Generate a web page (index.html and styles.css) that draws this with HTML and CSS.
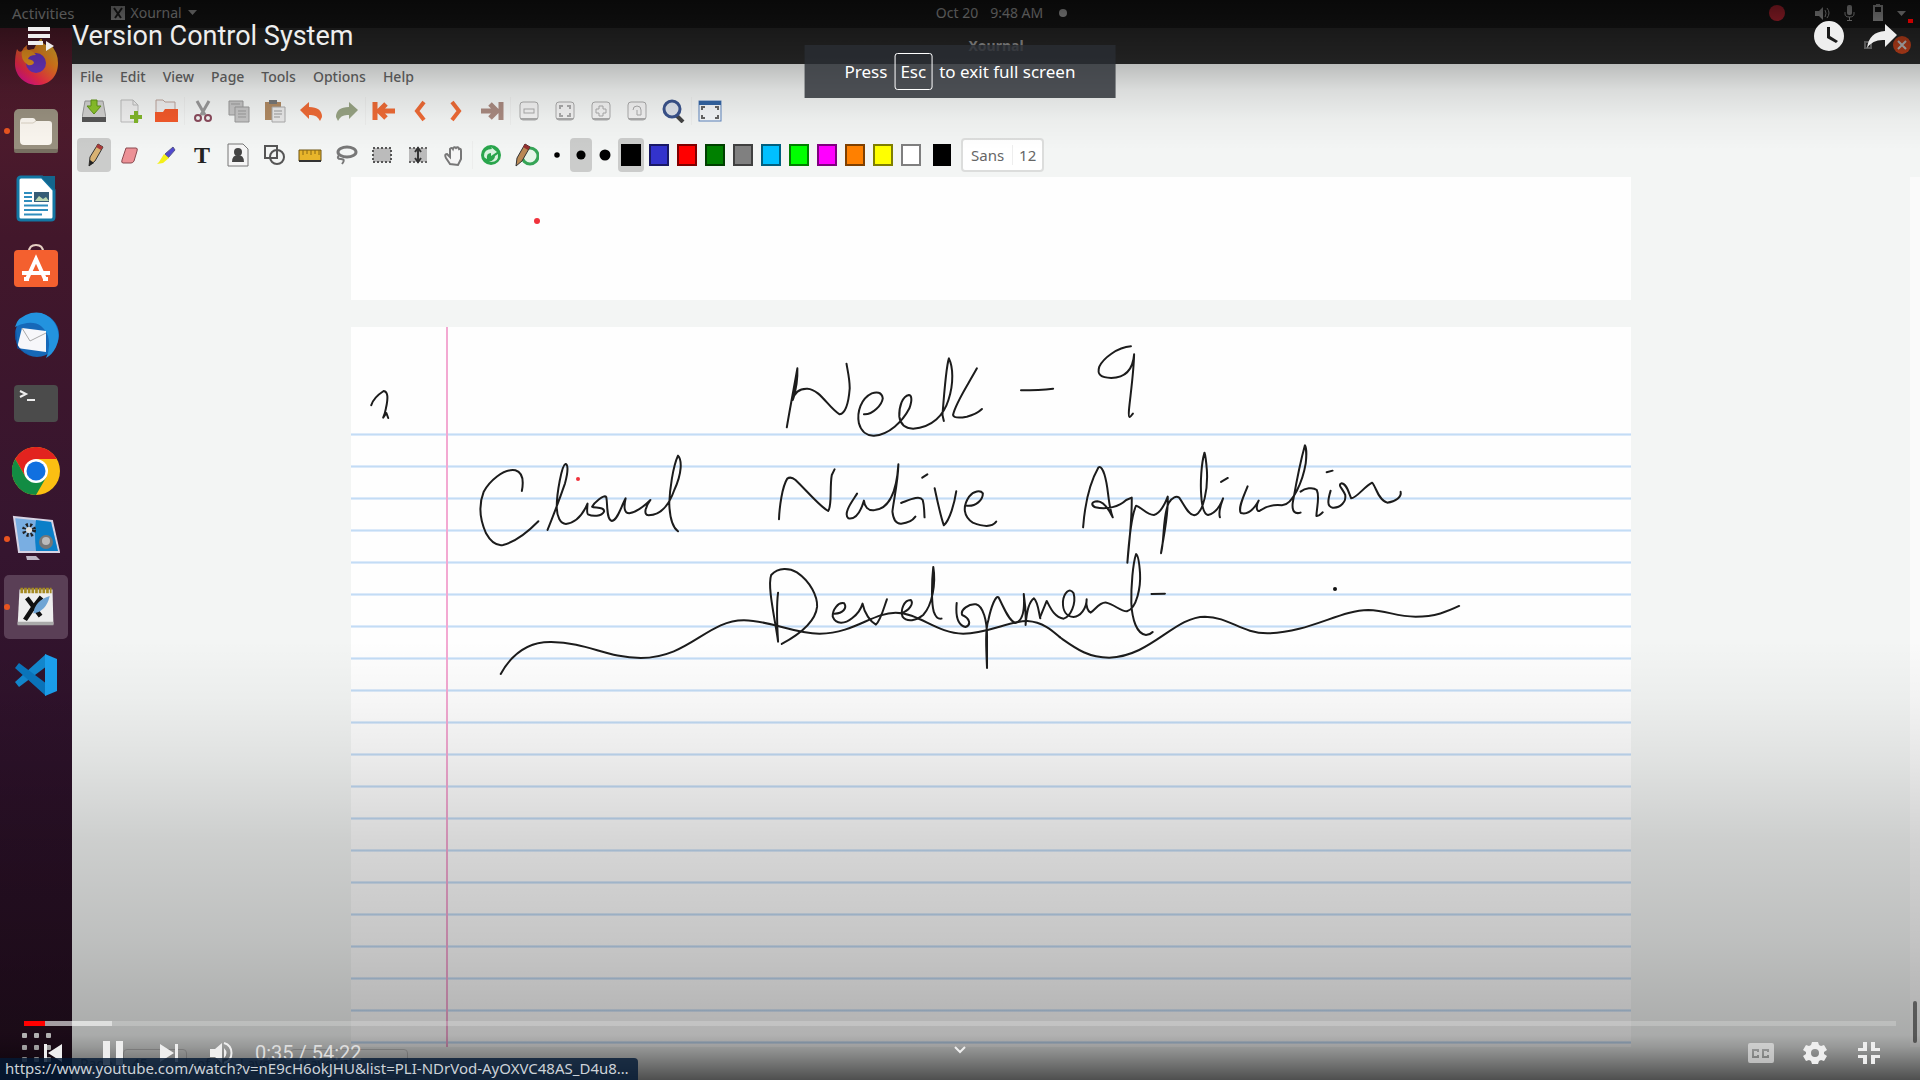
FILE: index.html
```
<!DOCTYPE html>
<html lang="en">
<head>
<meta charset="utf-8">
<meta name="viewport" content="width=device-width, initial-scale=1">
<title>Version Control System</title>
<link rel="stylesheet" href="styles.css">
</head>
<body>
<main class="player">

  <section class="desktop" aria-label="Video frame">
    <header class="topbar">
      <div class="topbar-left">
        <span>Activities</span>
        <span class="app-menu">
          <svg width="14" height="14" viewBox="0 0 14 14"><rect width="14" height="14" fill="#aaa"/><path d="M3 2l7 10M11 2L4 12" stroke="#222" stroke-width="2"/></svg>
          Xournal
          <svg width="9" height="6" viewBox="0 0 9 6"><path d="M0 0h9L4.500 5z" fill="currentColor"/></svg>
        </span>
      </div>
      <div class="clock"><span>Oct 20</span><span>9:48 AM</span><i class="notice"></i></div>
      <div class="tray">
        <svg width="140" height="20" viewBox="0 0 140 20" fill="currentColor">
          <circle cx="9" cy="10" r="8" fill="#d62a3a"/>
          <path d="M47 8h4l4-4v13l-4-4h-4z"/><path d="M57 7q2 3 0 7M59 5q4 5 0 10" stroke="currentColor" fill="none"/>
          <rect x="79" y="2" width="5" height="10" rx="2"/><path d="M77 9v2q0 3 4.500 3t4.500-3V9M81.500 14v3M79 17.500h5" stroke="currentColor" fill="none"/>
          <path d="M106 3h8v14h-8zM108 2h4" stroke="currentColor" stroke-width="2" fill="none"/><rect x="107" y="9" width="6" height="7"/>
          <path d="M129 8h9l-4.500 5z"/>
        </svg>
      </div>
    </header>

    <div class="workspace">
      <nav class="dock" aria-label="Dock">
        <button class="dock-item" aria-label="Firefox"><svg viewBox="0 0 48 48"><defs><linearGradient id="ff" x1="1" y1="0" x2=".3" y2="1"><stop offset="0" stop-color="#ffe03a"/><stop offset=".45" stop-color="#ff8a1f"/><stop offset=".8" stop-color="#ff2f4d"/><stop offset="1" stop-color="#e0138c"/></linearGradient></defs><path d="M5 10q2 4 5 2 2-4 5-6-1 5 2 5 3-1 5-1 4-9 8-11-1 5 4 7l2 2q2-2 2-3 8 8 8 19c0 14-9 22-21 22S3 37 3 25q0-9 2-15z" fill="url(#ff)"/><circle cx="24" cy="24" r="10" fill="#7139cf"/><path d="M10 12q8-4 14 4-7 0-8 4 6 1 6 4-2 3-6 2-8-5-6-14z" fill="#ffa022"/></svg></button>
        <button class="dock-item running" aria-label="Files"><svg viewBox="0 0 48 48"><rect x="2" y="2" width="44" height="44" rx="5" fill="#98907f"/><rect x="2" y="42" width="44" height="4" rx="2" fill="#776f61"/><path d="M8 15q0-4 3-4h10q2 0 3 3h13q3 0 3 3v17q0 4-4 4H12q-4 0-4-4z" fill="#faf6ef"/><path d="M9 16h12l3-2" stroke="#d8d0c2" fill="none"/></svg></button>
        <button class="dock-item" aria-label="LibreOffice Writer"><svg viewBox="0 0 48 48"><path d="M9 2h21l12 13v27q0 3-3 3H9q-3 0-3-3V5q0-3 3-3z" fill="#fff" stroke="#1377a4" stroke-width="3"/><path d="M28 1h15v15z" fill="#13658d"/><path d="M12 18h8M12 22h8M12 26h8M12 30.500h24M12 35h24M12 39.500h18" stroke="#2f8dbd" stroke-width="2"/><rect x="22" y="17" width="15" height="10" fill="#365d77"/><path d="M23 26l4-5 4 3 3-2 3 4z" fill="#b9d6b0"/></svg></button>
        <button class="dock-item" aria-label="Ubuntu Software"><svg viewBox="0 0 48 48"><path d="M17 9q0-7 7-7t7 7" fill="none" stroke="#e5cfc2" stroke-width="2"/><rect x="2" y="7" width="44" height="37" rx="4" fill="#f4602f"/><path d="M15 36l9-20 9 20M10 30h28M12 36h5M31 36h5" stroke="#fff" stroke-width="4" fill="none"/></svg></button>
        <button class="dock-item" aria-label="Thunderbird"><svg viewBox="0 0 48 48"><circle cx="25" cy="24" r="22" fill="#1668b8"/><path d="M3 16Q5 6 19 2q14-3 23 9 8 12 2 25-4 8-10 11 5-10 2-22-6-15-21-13-7 1-12 4z" fill="#2393df"/><path d="M10 17l24 3 0 21-29-4z" fill="#f7f7fa"/><path d="M10 17l8 13 16-8" fill="none" stroke="#aaa"/><path d="M4 18Q0 37 19 45L5 37z" fill="#0c448e"/></svg></button>
        <button class="dock-item" aria-label="Terminal"><svg viewBox="0 0 48 48"><rect x="2" y="6" width="44" height="37" rx="4" fill="#4b4b4b"/><path d="M8 12l6 3-6 3M15 21h8" fill="none" stroke="#eee" stroke-width="2"/></svg></button>
        <button class="dock-item" aria-label="Google Chrome"><svg viewBox="0 0 48 48"><circle cx="24" cy="24" r="24" fill="#fbbf12"/><path d="M3.200 12A24 24 0 0 1 44.800 12H24L13.600 30z" fill="#e2231f"/><path d="M3.200 12A24 24 0 0 0 24 48L34.400 30 24 24 13.600 30z" fill="#128c43"/><circle cx="24" cy="24" r="12" fill="#fff"/><circle cx="24" cy="24" r="9.500" fill="#1070e0"/></svg></button>
        <button class="dock-item running" aria-label="Kazam"><svg viewBox="0 0 48 48"><path d="M2 2l38 4 7 31H7z" fill="#79aee2" stroke="#d7d3e4" stroke-width="2"/><path d="M24 5l15 2 7 29-22 0q-2-18 0-31z" fill="#0b7fc8"/><circle cx="17" cy="15" r="5" fill="none" stroke="#222" stroke-width="4" stroke-dasharray="2 2"/><circle cx="17" cy="15" r="3" fill="#ddd"/><circle cx="34" cy="27" r="7" fill="#777"/><circle cx="34" cy="26" r="4" fill="#bbb"/><path d="M14 41h10l4 4H15z" fill="#bdb6c6"/></svg></button>
        <button class="dock-item running active" aria-label="Xournal"><svg viewBox="0 0 48 48"><path d="M6 5h36l1 38H4z" fill="#eee"/><path d="M4 40h39v4H4z" fill="#aaa"/><path d="M7 6h34" stroke="#a58a23" stroke-width="6" stroke-dasharray="3 1"/><path d="M14 14l15 20M30 13q-10 12-18 25" stroke="#111" stroke-width="5" fill="none"/><path d="M39 12q-16 5-18 19 14-2 18-19z" fill="#6ea4d4"/></svg></button>
        <button class="dock-item" aria-label="Visual Studio Code"><svg viewBox="0 0 48 48"><path d="M34 3L3 31l4 5 28-21z" fill="#1288cf"/><path d="M34 45L3 17l4-5 28 21z" fill="#0a76bd"/><path d="M33 3l12 5v32l-12 5z" fill="#1ba0ee"/></svg></button>
        <button class="dock-item dock-apps" aria-label="Show Applications"><svg viewBox="0 0 48 48" fill="#fff"><rect x="10" y="10" width="5" height="5" rx="1"/><rect x="22" y="10" width="5" height="5" rx="1"/><rect x="34" y="10" width="5" height="5" rx="1"/><rect x="10" y="22" width="5" height="5" rx="1"/><rect x="22" y="22" width="5" height="5" rx="1"/><rect x="34" y="22" width="5" height="5" rx="1"/><rect x="10" y="34" width="5" height="5" rx="1"/><rect x="22" y="34" width="5" height="5" rx="1"/><rect x="34" y="34" width="5" height="5" rx="1"/></svg></button>
      </nav>

      <div class="window">
        <div class="titlebar">
          <strong>Xournal</strong>
          <div class="window-buttons">
            <svg width="50" height="20" viewBox="0 0 50 20"><rect x="3" y="7" width="6" height="6" fill="none" stroke="#888" stroke-width="2"/><circle cx="40" cy="10" r="9" fill="#d8491f"/><path d="M36 6l8 8M44 6l-8 8" stroke="#ddd" stroke-width="2"/></svg>
          </div>
        </div>

        <nav class="menubar" aria-label="Menu">
          <button>File</button><button>Edit</button><button>View</button><button>Page</button><button>Tools</button><button>Options</button><button>Help</button>
        </nav>

        <div class="toolbar">
          <button class="tool" aria-label="Save"><svg viewBox="0 0 24 24"><path d="M3 2h18l3 17H0z" fill="#d0d0ce" stroke="#999"/><path d="M0 18h24v5H0z" fill="#555"/><path d="M9 1h6v6h4l-7 8-7-8h4z" fill="#8bc42b" stroke="#5f9316"/></svg></button>
          <button class="tool" aria-label="New"><svg viewBox="0 0 24 24"><path d="M3 1h12l5 5v17H3z" fill="#eee" stroke="#bbb"/><path d="M15 1v5h5" fill="none" stroke="#bbb"/><path d="M16 12h4v4h4v4h-4v4h-4v-4h-4v-4h4z" fill="#80b52a"/></svg></button>
          <button class="tool" aria-label="Open"><svg viewBox="0 0 24 24"><path d="M2 20V1h7l2 2h10v10" fill="#eee" stroke="#bba29a"/><path d="M1 23V13h8l2-3h13v13z" fill="#f2592a"/></svg></button>
          <i class="sep"></i>
          <button class="tool" aria-label="Cut"><svg viewBox="0 0 24 24" fill="none"><path d="M6 2l8 14M18 2l-8 14" stroke="#999" stroke-width="3"/><circle cx="7" cy="19" r="3" stroke="#8a4a5c" stroke-width="2"/><circle cx="17" cy="19" r="3" stroke="#8a4a5c" stroke-width="2"/></svg></button>
          <button class="tool" aria-label="Copy"><svg viewBox="0 0 24 24" fill="#c4c4c4" stroke="#999"><path d="M2 2h14v14H2z"/><path d="M8 8h14v15H8z"/><path d="M4 5h9M11 12h8M11 15h8M11 18h8"/></svg></button>
          <button class="tool" aria-label="Paste"><svg viewBox="0 0 24 24"><path d="M2 3h16v18H2z" fill="#b08a63"/><path d="M6 1h8v4H6z" fill="#777"/><path d="M9 8h13v15H9z" fill="#e8e8e8" stroke="#aaa"/><path d="M11 12h8M11 15h8M11 18h6" stroke="#999"/></svg></button>
          <button class="tool" aria-label="Undo"><svg viewBox="0 0 24 24"><path d="M1 11l9-8v5q13 0 13 10l-2 4q-3-7-11-6v4z" fill="#ee6a35"/></svg></button>
          <button class="tool" aria-label="Redo"><svg viewBox="0 0 24 24"><path d="M23 11l-9-8v5Q1 8 1 18l2 4q3-7 11-6v4z" fill="#97a383"/></svg></button>
          <i class="sep"></i>
          <button class="tool" aria-label="First page"><svg viewBox="0 0 24 24" fill="none" stroke="#ee6a35" stroke-width="4"><path d="M3 3v18M7 12h16M14 5l-7 7 7 7" stroke-width="5"/></svg></button>
          <button class="tool" aria-label="Previous page"><svg viewBox="0 0 24 24" fill="none" stroke="#ee6a35" stroke-width="4"><path d="M16 3L9 12l7 9"/></svg></button>
          <button class="tool" aria-label="Next page"><svg viewBox="0 0 24 24" fill="none" stroke="#ee6a35" stroke-width="4"><path d="M8 3l7 9-7 9"/></svg></button>
          <button class="tool" aria-label="Last page"><svg viewBox="0 0 24 24" fill="none" stroke="#a98a80" stroke-width="5"><path d="M21 3v18M17 12H1M10 5l7 7-7 7"/></svg></button>
          <i class="sep"></i>
          <button class="tool" aria-label="Zoom out"><svg viewBox="0 0 24 24" fill="#f2f2f2" stroke="#aaa"><rect x="3" y="3" width="18" height="18" rx="3"/><path d="M4 20h16" stroke-width="2"/><rect x="7" y="10" width="10" height="4"/></svg></button>
          <button class="tool" aria-label="Page width"><svg viewBox="0 0 24 24" fill="#f2f2f2" stroke="#aaa"><rect x="3" y="3" width="18" height="18" rx="3"/><path d="M4 20h16" stroke-width="2"/><path d="M7 10V7h3M14 7h3v3M17 14v3h-3M10 17H7v-3" stroke-width="2"/></svg></button>
          <button class="tool" aria-label="Zoom in"><svg viewBox="0 0 24 24" fill="#f2f2f2" stroke="#aaa"><rect x="3" y="3" width="18" height="18" rx="3"/><path d="M4 20h16" stroke-width="2"/><path d="M10 7h4v3h3v4h-3v3h-4v-3H7v-4h3z"/></svg></button>
          <button class="tool" aria-label="Normal size"><svg viewBox="0 0 24 24" fill="#f2f2f2" stroke="#aaa"><rect x="3" y="3" width="18" height="18" rx="3"/><path d="M4 20h16" stroke-width="2"/><path d="M8 11q0-4 4-4t4 4v5h-4v-5"/></svg></button>
          <button class="tool" aria-label="Find zoom"><svg viewBox="0 0 24 24"><path d="M15 16l7 7" stroke="#444" stroke-width="4"/><circle cx="11" cy="10" r="8" fill="#dde2ea" stroke="#3a538c" stroke-width="3"/></svg></button>
          <i class="sep"></i>
          <button class="tool" aria-label="Full screen"><svg viewBox="0 0 24 24"><rect x="1" y="2" width="22" height="20" fill="#f4f6f9" stroke="#5f86bd"/><path d="M1 2h22v4H1z" fill="#3465a4"/><path d="M4 11V8h3M17 8h3v3M20 16v3h-3M7 19H4v-3" stroke="#666" stroke-width="2" fill="none"/></svg></button>
        </div>

        <div class="toolbar">
          <button class="tool selected" aria-label="Pen"><svg viewBox="0 0 24 24"><path d="M7 23l1-9 8-13 5 3-8 14z" fill="#d8b273" stroke="#333"/><path d="M14 4l2-3 5 3-2 3z" fill="#a93a3a"/><path d="M7 23l1-6 4 3z" fill="#222"/></svg></button>
          <button class="tool" aria-label="Eraser"><svg viewBox="0 0 24 24"><path d="M8 5h10q2 0 1 3l-3 10q-1 2-3 2H5q-2 0-1-3z" fill="#ec9196" stroke="#8a4a50"/></svg></button>
          <button class="tool" aria-label="Highlighter"><svg viewBox="0 0 24 24"><path d="M11 11l8-7 2 3-7 8z" fill="#5049cf" stroke="#55558a"/><path d="M5 19l5-8 5 4-6 5-6 1z" fill="#f3ef19"/></svg></button>
          <button class="tool glyph" aria-label="Text">T</button>
          <button class="tool" aria-label="Image"><svg viewBox="0 0 24 24"><path d="M2 1h15l5 5v17H2z" fill="#f5f5f5" stroke="#777"/><circle cx="12" cy="9" r="4" fill="#444"/><path d="M6 19q0-7 6-7t6 7z" fill="#444"/></svg></button>
          <button class="tool" aria-label="Shapes"><svg viewBox="0 0 24 24" fill="none" stroke="#555" stroke-width="2"><path d="M3 3h12v12H3z"/><circle cx="15" cy="14" r="7"/></svg></button>
          <button class="tool" aria-label="Ruler"><svg viewBox="0 0 24 24"><path d="M1 7h22v11H1z" fill="#e8b52b" stroke="#6f5512"/><path d="M1 18h22" stroke="#333" stroke-width="2"/><path d="M5 7v5M9 7v4M13 7v5M17 7v4M21 7v5" stroke="#8a6916"/></svg></button>
          <button class="tool" aria-label="Lasso select"><svg viewBox="0 0 24 24" fill="none"><ellipse cx="13" cy="9" rx="9" ry="5" stroke="#777" stroke-width="3"/><path d="M5 12q-3 4 2 4t1 5" stroke="#777" stroke-width="2"/></svg></button>
          <button class="tool" aria-label="Select region"><svg viewBox="0 0 24 24"><rect x="3" y="5" width="18" height="14" fill="#bbb" stroke="#555" stroke-width="2" stroke-dasharray="2 2"/></svg></button>
          <button class="tool" aria-label="Vertical space"><svg viewBox="0 0 24 24"><rect x="3" y="5" width="18" height="14" fill="#bbb"/><path d="M3 5h18M3 19h18" stroke="#666" stroke-width="2" stroke-dasharray="2 2"/><path d="M12 5v14M9 9l3-4 3 4M9 15l3 4 3-4" stroke="#333" stroke-width="2" fill="none"/></svg></button>
          <button class="tool" aria-label="Hand"><svg viewBox="0 0 24 24"><path d="M8 21l-4-6q-2-4 1-4l3 3V6q2-2 3 0 1-3 3-1 2-2 3 1 2-1 2 2v8l-3 6z" fill="#f5f5f5" stroke="#777" stroke-width="2"/></svg></button>
          <i class="sep"></i>
          <button class="tool" aria-label="Default tool"><svg viewBox="0 0 24 24"><circle cx="12" cy="12" r="10" fill="#29a54c"/><path d="M5 13q0-7 8-7l-1-2 6 5-6 4v-3q-5 0-4 6-3-1-3-3z" fill="#d9f2df"/><path d="M19 11q1 9-9 8 6-2 6-6z" fill="#d9f2df"/></svg></button>
          <button class="tool" aria-label="Default pen"><svg viewBox="0 0 24 24"><circle cx="15" cy="13" r="8" fill="#e5f5e8" stroke="#35a456" stroke-width="3"/><path d="M1 23l1-8L10 1l5 3-8 14z" fill="#b98954" stroke="#333"/><path d="M8 4l2-3 5 3-2 3z" fill="#922f2f"/></svg></button>
          <button class="nib" aria-label="Fine"><svg viewBox="0 0 24 24"><circle cx="12" cy="12" r="3"/></svg></button>
          <button class="nib selected" aria-label="Medium"><svg viewBox="0 0 24 24"><circle cx="12" cy="12" r="5"/></svg></button>
          <button class="nib" aria-label="Thick"><svg viewBox="0 0 24 24"><circle cx="12" cy="12" r="6"/></svg></button>
          <div class="palette">
            <button class="swatch black selected" aria-label="Black"></button>
            <button class="swatch blue" aria-label="Blue"></button>
            <button class="swatch red" aria-label="Red"></button>
            <button class="swatch green" aria-label="Green"></button>
            <button class="swatch gray" aria-label="Gray"></button>
            <button class="swatch cyan" aria-label="Light blue"></button>
            <button class="swatch lime" aria-label="Light green"></button>
            <button class="swatch magenta" aria-label="Magenta"></button>
            <button class="swatch orange" aria-label="Orange"></button>
            <button class="swatch yellow" aria-label="Yellow"></button>
            <button class="swatch white" aria-label="White"></button>
          </div>
          <button class="current-color" aria-label="Current colour"></button>
          <button class="font-button"><span>Sans</span><span class="font-size">12</span></button>
        </div>

        <div class="content">
          <div class="canvas">
            <div class="sheet sheet-end">
              <svg class="ink" viewBox="0 0 1280 123"><circle cx="186" cy="44" r="3" fill="#f0323c"/></svg>
            </div>
            <div class="sheet sheet-ruled">
              <svg class="ink" viewBox="0 0 1280 720" role="img" aria-label="Week - 9 Cloud Native Application Development">
                <g class="stroke" transform="translate(-11 -7) scale(.4592 .3333)">
                  <path d="M68 256C72 235 85 222 95 213C105 215 105 235 100 265C98 280 95 290 94 293L101 279L105 294"/>
                  <path d="M973 322C978 280 985 230 996 145C997 180 992 215 986 240C990 215 1000 205 1018 206C1045 208 1065 265 1088 283C1102 280 1108 240 1110 205C1110 175 1105 150 1103 131"/>
                  <path d="M1141 283C1160 285 1180 255 1182 235C1180 215 1168 215 1158 220C1135 235 1125 275 1130 310C1135 335 1148 348 1163 347C1195 345 1225 305 1240 265C1248 235 1243 225 1239 225C1225 228 1217 260 1218 290C1220 310 1228 325 1248 326C1290 322 1315 285 1325 240C1337 190 1335 140 1326 115C1320 140 1315 230 1312 285L1315 303"/>
                  <path d="M1387 145C1365 200 1340 250 1335 285C1337 295 1350 294 1365 290C1380 285 1392 275 1398 267"/>
                  <path d="M1483 211C1510 211 1535 209 1553 206"/>
                  <path d="M396 513C400 485 398 458 382 451C355 445 325 485 313 515C300 560 305 600 318 640C330 670 342 678 355 675C385 665 410 635 432 604"/>
                  <path d="M452 630C465 585 480 530 490 490C498 450 496 432 491 432C483 435 472 520 472 560C472 590 480 612 492 612C515 608 530 580 539 551C538 575 537 580 540 583C550 590 570 590 575 575C577 560 553 565 549 560C553 550 575 520 580 532C583 555 580 600 592 603C605 600 612 560 622 535C618 560 618 580 630 580C650 575 665 555 676 540C665 560 660 585 672 586C700 585 718 550 728 510C745 460 745 420 736 407C725 440 718 510 717 550C718 590 722 620 736 634"/>
                  <path d="M956 598C957 560 963 500 974 476C980 470 985 472 992 480C1015 510 1045 560 1063 573C1072 560 1066 500 1071 465L1077 448"/>
                  <path d="M1126 521C1115 545 1095 580 1107 595C1125 600 1135 570 1141 542C1142 560 1150 572 1162 571C1195 568 1212 520 1216 433C1215 490 1205 545 1203 575C1205 600 1210 612 1222 611C1238 609 1248 600 1253 590"/>
                  <path d="M1222 549C1240 540 1262 525 1269 540C1273 560 1272 580 1273 592M1268 473L1279 463"/>
                  <path d="M1295 505C1302 550 1308 590 1315 616C1328 600 1338 550 1342 514"/>
                  <path d="M1365 557C1385 560 1400 540 1400 520C1395 510 1380 512 1370 530C1355 560 1358 590 1378 608C1400 620 1420 622 1429 605"/>
                  <path d="M954 818C950 860 952 920 954 965C948 900 930 800 939 765C955 740 980 745 995 757C1025 785 1040 830 1039 860C1036 900 1005 940 962 972"/>
                  <path d="M1077 881C1095 880 1105 865 1098 850C1085 845 1072 870 1073 890C1080 915 1100 912 1115 895C1130 880 1135 865 1138 851C1142 880 1155 905 1167 914C1178 900 1185 860 1191 838"/>
                  <path d="M1222 880C1240 872 1250 850 1243 840C1228 840 1220 870 1225 890C1235 908 1255 902 1270 885C1290 855 1298 790 1292 741C1288 790 1288 850 1293 875C1298 895 1303 898 1310 896"/>
                  <path d="M1343 849C1340 890 1345 915 1362 921C1375 915 1372 895 1355 885C1350 870 1370 850 1385 853C1400 858 1410 900 1409 960L1409 1044C1407 980 1405 930 1412 900C1418 860 1428 825 1434 832C1445 860 1455 900 1470 909C1485 905 1492 880 1489 822C1493 860 1494 890 1493 915C1495 880 1500 845 1511 835C1520 845 1522 880 1525 895"/>
                  <path d="M350 1062C375 1000 410 965 460 966C540 968 580 1013 655 1014C760 1014 800 900 880 901C940 902 990 942 1045 941C1120 940 1160 878 1210 878C1260 878 1300 941 1357 941C1410 941 1460 902 1497 903C1530 906 1550 930 1568 952"/>
                </g>
                <g class="stroke" transform="translate(689 -7) scale(.3954 .3333)">
                  <path d="M230 79C195 82 160 115 150 140C143 165 155 173 180 174C215 173 235 150 238 103C237 160 228 230 225 270C223 300 228 292 235 281"/>
                  <path d="M109 622C113 560 125 490 148 442C160 435 168 480 172 520C175 550 178 575 184 592C175 570 160 545 145 544C130 545 128 555 140 562C170 570 200 560 218 540L232 533C233 600 225 670 221 728C225 660 230 590 243 557C255 560 270 585 288 585C305 580 315 555 323 530C325 590 312 650 306 700C315 660 310 590 325 550C335 530 345 528 352 533C365 555 375 585 390 586C415 580 425 500 422 450C420 420 418 405 416 398C408 430 405 490 408 530C410 565 415 583 425 585C445 580 455 560 463 535C455 560 452 580 455 592M458 486L475 474"/>
                  <path d="M525 499C515 530 500 565 508 579C525 585 540 570 553 542C545 560 548 575 555 573C570 560 590 553 612 556C640 555 665 480 672 430C675 400 672 380 670 376C655 440 645 510 639 550C637 575 645 583 659 578"/>
                  <path d="M659 515C670 505 690 500 700 510C708 530 700 560 699 588C705 590 710 582 715 577M725 457L740 452"/>
                  <path d="M735 512C728 540 725 560 740 563C760 565 775 545 772 525C765 505 752 495 762 490C775 490 780 515 787 535C800 535 820 500 840 488C850 500 855 540 878 548C900 545 915 530 912 515"/>
                  <path d="M0 892L17 843C25 860 35 892 60 896C78 890 92 850 85 820C75 800 60 820 58 845C57 875 68 890 85 891C102 890 118 865 118 838C115 860 122 875 128 878C140 870 150 845 168 848C190 855 205 875 220 874C245 865 255 800 253 760C251 725 247 705 243 702C235 730 230 800 231 850C233 900 245 942 268 945C277 944 282 940 285 936M282 822L316 821"/>
                  <path d="M50 952C90 985 120 1013 175 1013C280 1010 340 890 417 890C480 892 510 940 575 940C680 938 760 870 830 870C880 872 900 890 950 890C1000 890 1030 875 1060 858"/>
                </g>
                <circle cx="984" cy="262" r="2" fill="#111"/>
                <circle cx="227" cy="152" r="2" fill="#f0323c"/>
              </svg>
            </div>
          </div>
          <div class="scroll-track"><div class="scroll-thumb"></div></div>
        </div>

        <footer class="statusbar">
          <label for="page-no">Page</label><input id="page-no" value="45">
          <span>of 45</span>
          <label for="layer">Layer:</label><select id="layer"><option>Layer 1</option></select>
        </footer>
      </div>
    </div>
  </section>

  <section class="controls" aria-label="Player controls">
    <header class="controls-top">
      <button class="playlist" aria-label="Playlist"><svg width="28" height="26" viewBox="0 0 28 26"><path d="M1 1h22v4H1zM1 8h22v4H1zM1 15h15v4H1zM19 15l8 5-8 5z"/></svg></button>
      <h1>Version Control System</h1>
      <button aria-label="Watch later"><svg width="36" height="36" viewBox="0 0 36 36"><path fill-rule="evenodd" d="M18 3a15 15 0 1 0 0 30 15 15 0 0 0 0-30zM16 9h3v9l8 5-2 2-9-5z"/></svg></button>
      <button aria-label="Share"><svg width="36" height="36" viewBox="0 0 36 36"><path d="M21 6l12 11-12 12v-7Q9 21 3 30 5 14 21 13z"/></svg></button>
      <i class="live-mark"></i>
    </header>

    <footer class="controls-bottom">
      <div class="progress"><div class="buffered" style="width:4.700%"></div><div class="played" style="width:1.100%"></div></div>
      <div class="control-row">
        <div class="row-left">
          <button aria-label="Previous"><svg width="36" height="36" viewBox="0 0 36 36"><path d="M9 9h3v18H9zM27 9v18L13 18z"/></svg></button>
          <button aria-label="Pause"><svg width="36" height="36" viewBox="0 0 36 36"><path d="M10 6h7v24h-7zM23 6h7v24h-7z"/></svg></button>
          <button aria-label="Next"><svg width="36" height="36" viewBox="0 0 36 36"><path d="M24 9h3v18h-3zM9 9v18l14-9z"/></svg></button>
          <button class="mute" aria-label="Mute"><svg width="36" height="36" viewBox="0 0 36 36"><path d="M7 14v8h5l7 6V8l-7 6zM21 13q5 5 0 10z"/><path d="M21 8c10 3 10 17 0 20" fill="none" stroke="#eee" stroke-width="2"/></svg></button>
          <span class="time">0:35 / 54:22</span>
        </div>
        <button class="more" aria-label="Scroll for details"><svg width="16" height="16" viewBox="0 0 16 16"><path d="M3 2l5 5 5-5" fill="none" stroke="#eee" stroke-width="2"/></svg></button>
        <div class="row-right">
          <button class="captions" aria-label="Captions"><svg width="36" height="36" viewBox="0 0 36 36"><path fill-rule="evenodd" d="M7 8h22q2 0 2 2v16q0 2-2 2H7q-2 0-2-2V10q0-2 2-2zM9 14v9h7v-3h-2v1h-3v-5h3v1h2v-3zM19 14v9h7v-3h-2v1h-3v-5h3v1h2v-3z"/></svg></button>
          <button aria-label="Settings"><svg width="36" height="36" viewBox="0 0 36 36"><path fill-rule="evenodd" d="M15 7h6l1 3 2 1 3-1 3 5-3 2v2l3 2-3 5-3-1-2 1-1 3h-6l-1-3-2-1-3 1-3-5 3-2v-2l-3-2 3-5 3 1 2-1zM18 14a4 4 0 1 0 0 8 4 4 0 0 0 0-8z"/></svg></button>
          <button aria-label="Exit full screen"><svg width="36" height="36" viewBox="0 0 36 36"><path d="M12 7h4v9H7v-3h5zM20 7h4v6h5v3h-9zM7 20h9v9h-4v-6H7zM20 20h9v3h-5v6h-4z"/></svg></button>
        </div>
      </div>
    </footer>
  </section>

  <p class="toast">Press <kbd>Esc</kbd> to exit full screen</p>
  <a class="link-status" href="#">https://www.youtube.com/watch?v=nE9cH6okJHU&amp;list=PLI-NDrVod-AyOXVC48AS_D4u8…</a>
</main>
</body>
</html>
```
FILE: styles.css
```
* { box-sizing: border-box; }
body {
  margin: 0;
  background: #000;
  font-family: "Noto Sans", "Open Sans", sans-serif;
}
button {
  margin: 0;
  padding: 0;
  border: 0;
  background: none;
  color: inherit;
  font: inherit;
}
svg { display: block; }

.player {
  position: relative;
  height: 100vh;
  overflow: hidden;
}

/* recorded desktop */
.desktop {
  display: flex;
  flex-direction: column;
  height: 100%;
}
.topbar {
  display: grid;
  grid-template-columns: 1fr auto 1fr;
  align-items: center;
  height: 28px;
  padding: 0 12px 2px 95px;
  background: #191919;
  color: #bbb;
  font-size: 15px;
  line-height: 20px;
}
.topbar-left {
  display: flex;
  gap: 36px;
  margin-left: -83px;
}
.app-menu { display: flex; align-items: center; gap: 6px; font-size: 14px; }
.clock { display: flex; align-items: center; gap: 12px; font-size: 14px; }
.notice {
  width: 8px;
  height: 8px;
  margin-left: 4px;
  border-radius: 50%;
  background: #ccc;
}
.tray { justify-self: end; }

.workspace {
  display: flex;
  flex: 1;
  min-height: 0;
}
.dock {
  display: flex;
  flex-direction: column;
  align-items: center;
  gap: 4px;
  width: 72px;
  padding: 3px 0 1px;
  background: linear-gradient(#561d2d, #42172b 20%, #35152f 50%, #2c1129 70%, #250f20);
}
.dock-item {
  display: flex;
  align-items: center;
  justify-content: center;
  position: relative;
  width: 64px;
  height: 64px;
  flex: none;
  border-radius: 5px;
}
.dock-item svg { width: 48px; height: 48px; }
.dock-item.active { background: #5a3f56; }
.dock-item.active svg { width: 44px; height: 44px; }
.dock-item.running::before {
  content: "";
  position: absolute;
  left: 0;
  width: 6px;
  height: 6px;
  border-radius: 50%;
  background: #e95420;
}
.dock-apps { margin-top: auto; }

.window {
  display: flex;
  flex: 1;
  flex-direction: column;
  min-width: 0;
  background: #f3f5f4;
}
.titlebar {
  display: grid;
  grid-template-columns: 1fr auto 1fr;
  align-items: center;
  height: 36px;
  padding: 0 8px 2px;
  background: #2c2c2c;
  color: #aaa;
  font-size: 14px;
}
.titlebar strong { grid-column: 2; }
.window-buttons { justify-self: end; }
.menubar {
  display: flex;
  align-items: center;
  gap: 17px;
  height: 25px;
  padding: 0 8px;
  color: #666;
  font-size: 14px;
  font-weight: 500;
}
.toolbar {
  display: flex;
  align-items: center;
  height: 44px;
  padding: 0 4px;
}
.tool {
  display: flex;
  align-items: center;
  justify-content: center;
  width: 34px;
  height: 34px;
  margin: 0 1px;
  border-radius: 4px;
}
.tool svg { width: 24px; height: 24px; }
.glyph {
  color: #222;
  font-family: "Liberation Serif", serif;
  font-size: 24px;
  font-weight: 700;
}
.tool.selected, .nib.selected { background: #cbcccb; }
.sep { width: 1px; height: 28px; background: #ecedec; }
.nib {
  width: 22px;
  height: 34px;
  margin: 0 1px;
  border-radius: 4px;
}
.nib svg { width: 22px; height: 24px; }
.palette { display: flex; }
.swatch {
  width: 26px;
  height: 34px;
  margin: 0 1px;
  border-radius: 4px;
}
.swatch::before {
  content: "";
  display: block;
  width: 16px;
  height: 18px;
  margin: 0 auto;
  border: 2px solid rgba(0, 0, 0, .5);
  background: currentColor;
}
.swatch.selected { background: #cbcccb; }
.black { color: #000; }
.blue { color: #3333cc; }
.red { color: #ff0000; }
.green { color: #008000; }
.gray { color: #808080; }
.cyan { color: #00c0ff; }
.lime { color: #00ff00; }
.magenta { color: #ff00ff; }
.orange { color: #ff8000; }
.yellow { color: #ffff00; }
.white { color: #ffffff; }
.current-color {
  width: 18px;
  height: 22px;
  margin: 0 10px 0 8px;
  background: #000;
}
.font-button {
  display: flex;
  align-items: center;
  height: 34px;
  border: 2px solid #dcdddc;
  border-radius: 4px;
  background: #fff;
  color: #666;
  font-size: 15px;
}
.font-button span { padding: 0 8px; }
.font-button .font-size { padding: 0 6px; border-left: 1px solid #eee; }

.content {
  display: flex;
  flex: 1;
  min-height: 0;
}
.canvas {
  display: flex;
  flex: 1;
  flex-direction: column;
  align-items: center;
  gap: 27px;
  min-width: 0;
  overflow: hidden;
}
.sheet {
  width: 100%;
  max-width: 1280px;
  overflow: hidden;
  background: #fefefe;
}
.sheet-end { flex: none; height: 123px; }
.sheet-ruled {
  flex: 1;
  background:
    linear-gradient(#f3a9d2, #f3a9d2) 95px 0 / 2px 100% no-repeat,
    repeating-linear-gradient(#dceafa 0 1px, #c3dcf5 1px 2px, #dceafa 2px 3px, transparent 3px 32px) 0 106px no-repeat,
    #fefefe;
}
.ink { width: 1280px; }
.stroke path {
  fill: none;
  stroke: #1c1c1c;
  stroke-width: 2px;
  stroke-linecap: round;
  stroke-linejoin: round;
  vector-effect: non-scaling-stroke;
}
.scroll-track {
  display: flex;
  align-items: flex-end;
  width: 10px;
  padding: 0 3px 4px;
  background: #fafafa;
}
.scroll-thumb {
  width: 4px;
  height: 42px;
  border-radius: 2px;
  background: #7d7d7d;
}
.statusbar {
  display: flex;
  align-items: center;
  gap: 10px;
  height: 33px;
  padding: 0 8px;
  color: #777;
  font-size: 14px;
}
.statusbar input, .statusbar select {
  height: 30px;
  border: 1px solid #ccc;
  border-radius: 4px;
  background: #f3f5f4;
  color: #777;
  font: inherit;
}
.statusbar input { width: 64px; padding: 0 8px; }
.statusbar select { width: 118px; padding: 0 8px; }

/* player chrome over the frame */
.controls {
  position: absolute;
  inset: 0;
  display: flex;
  flex-direction: column;
  justify-content: space-between;
  background:
    linear-gradient(rgba(0, 0, 0, .65), rgba(0, 0, 0, .4) 34px, rgba(0, 0, 0, .22) 66px, rgba(0, 0, 0, .1) 90px, rgba(0, 0, 0, .03) 120px, transparent 150px),
    linear-gradient(to top, rgba(0, 0, 0, .68), rgba(0, 0, 0, .38) 33px, rgba(0, 0, 0, .3) 45px, rgba(0, 0, 0, .27) 80px, rgba(0, 0, 0, .22) 140px, rgba(0, 0, 0, .155) 240px, rgba(0, 0, 0, .08) 320px, rgba(0, 0, 0, .03) 380px, transparent 440px);
  color: #eee;
  font-family: Roboto, "Noto Sans", sans-serif;
}
.controls svg { fill: #eee; }
.controls-top {
  display: flex;
  align-items: center;
  gap: 17px;
  height: 71px;
  padding: 0 20px 0 27px;
}
.controls-top h1 {
  flex: 1;
  margin: 0;
  font-size: 27px;
  font-weight: 400;
  line-height: 36px;
}
.playlist { padding-top: 6px; }
.live-mark {
  position: absolute;
  top: 19px;
  right: 7px;
  width: 5px;
  height: 4px;
  background: #c80000;
}
.controls-bottom { padding: 0 24px; }
.progress {
  position: relative;
  height: 5px;
  background: rgba(255, 255, 255, .2);
}
.buffered, .played {
  position: absolute;
  top: 0;
  left: 0;
  height: 100%;
}
.buffered { background: rgba(255, 255, 255, .5); }
.played { background: #f00; }
.control-row {
  display: grid;
  grid-template-columns: 1fr auto 1fr;
  align-items: center;
  height: 54px;
}
.row-left, .row-right { display: flex; align-items: center; }
.row-left { padding-left: 11px; gap: 22px; }
.row-left .mute { margin-left: -6px; }
.row-right { justify-content: flex-end; gap: 18px; padding-right: 9px; }
.captions { opacity: .6; }
.time { font-size: 20px; color: #ddd; margin-left: -6px; }

.toast {
  position: absolute;
  top: 45px;
  left: 50%;
  display: flex;
  align-items: center;
  gap: 7px;
  height: 53px;
  margin: 0;
  padding: 0 40px;
  transform: translateX(-50%);
  background: rgba(42, 45, 51, .82);
  color: #fff;
  font-size: 17px;
  white-space: nowrap;
}
.toast kbd {
  padding: 0 5px;
  border: 1px solid #fff;
  border-radius: 3px;
  font: inherit;
  line-height: 35px;
}
.link-status {
  position: absolute;
  bottom: 0;
  left: 0;
  height: 22px;
  padding: 0 9px 0 5px;
  border-top-right-radius: 4px;
  background: rgba(4, 26, 52, .82);
  color: #ccd2d8;
  font-size: 15px;
  line-height: 20px;
  text-decoration: none;
  white-space: nowrap;
}
```
